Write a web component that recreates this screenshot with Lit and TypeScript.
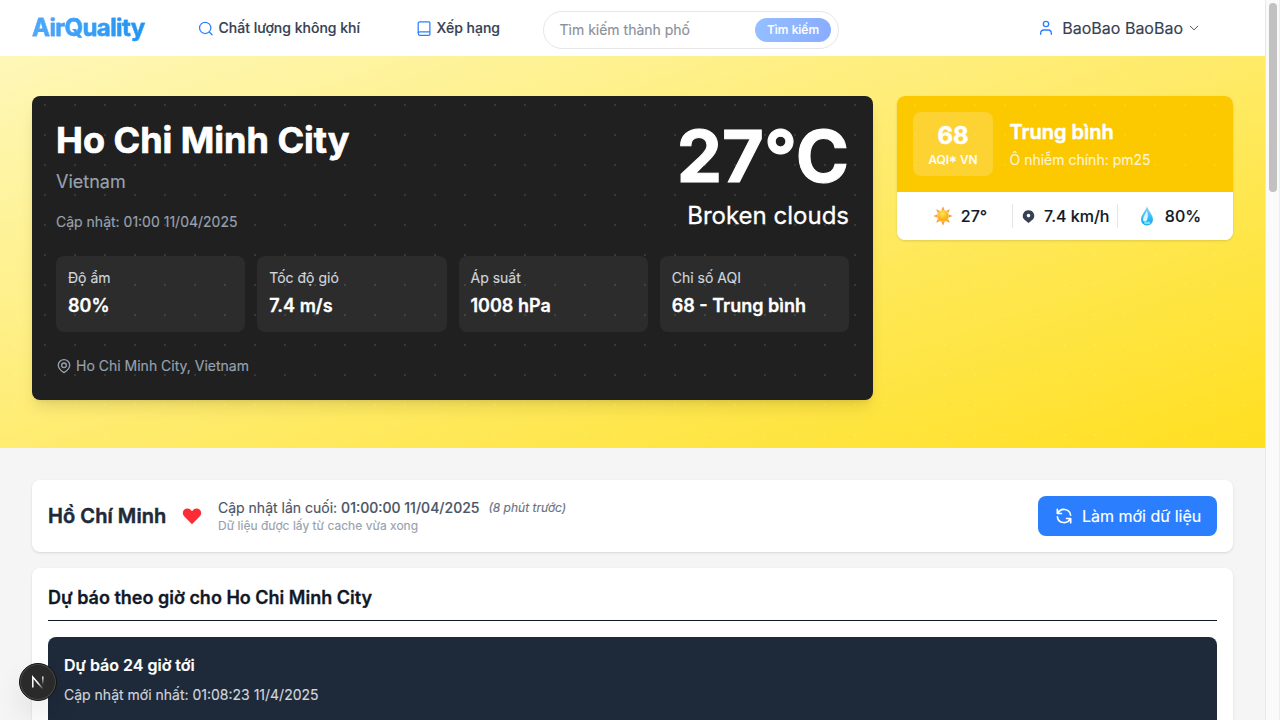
import { LitElement, html, css, svg } from "lit";
import { customElement } from "lit/decorators.js";

const stats = [
  ["Độ ẩm", "80%"],
  ["Tốc độ gió", "7.4 m/s"],
  ["Áp suất", "1008 hPa"],
  ["Chỉ số AQI", "68 - Trung bình"],
];

const rays = Array.from({ length: 8 }, (_, i) => i * 45);

@customElement("app-root")
export class AppRoot extends LitElement {
  static styles = css`
    :host {
      display: flex;
      width: 1280px;
      height: 720px;
      overflow: hidden;
      position: relative;
      background: #f5f5f5;
      font-family: Inter, "Noto Sans", sans-serif;
      font-size: 16px;
      line-height: 24px;
      color: #101828;
      -webkit-text-stroke: 0.15px currentColor;
    }
    * { box-sizing: border-box; margin: 0; }
    svg { display: block; flex: none; }
    .page { width: 1265px; height: 720px; overflow: hidden; }
    .scroll { width: 15px; background: #fafafa; border-left: 1px solid #e8e8e8; border-right: 1px solid #ededed; padding: 3px 2px 0 3px; }
    .thumb { width: 8px; height: 189px; border-radius: 4px; background: #c1c1c1; }
    .header { height: 56px; background: #fff; display: flex; align-items: center; padding: 0 66px 0 32px; }
    .logo { font-size: 24px; line-height: 32px; font-weight: 700; letter-spacing: -0.6px; width: 113px; white-space: nowrap; background: linear-gradient(90deg, #51a9fa, #1f93f3); -webkit-background-clip: text; background-clip: text; color: transparent; -webkit-text-stroke: 0.4px #3a9ff6; }
    .nav { display: flex; align-items: center; gap: 6px; font-size: 14px; line-height: 20px; font-weight: 500; color: #364153; white-space: nowrap; }
    .nav svg, .user .person { color: #2b7fff; }
    .nav-air { margin-left: 52.5px; width: 164px; }
    .nav-rank { margin-left: 54px; width: 85.5px; }
    .search { margin: 4px 0 0 42px; width: 296px; height: 38px; border: 1px solid #e5e7eb; border-radius: 19px; display: flex; align-items: center; justify-content: space-between; padding: 0 7px 0 15.5px; font-size: 14px; color: #8b909a; }
    .search-btn { width: 76px; height: 24px; border-radius: 12px; background: linear-gradient(90deg, #94bfff, #8aacff); color: #fff; font-size: 12px; font-weight: 500; text-align: center; }
    .user { margin-left: auto; display: flex; align-items: center; color: #364153; }
    .user .name { margin: 0 6px 0 8px; }
    .hero { position: relative; height: 392px; padding: 40px 32px 0; display: flex; align-items: flex-start; gap: 24px; background: linear-gradient(to bottom right, #fef9c2, #ffdf20) 0 -56px / 1265px 448px no-repeat; }
    .dots { position: absolute; inset: 0; pointer-events: none; background: radial-gradient(circle at center, rgba(255, 255, 255, 0.1) 1px, transparent 1px) 0 -56px / 30px 30px; }
    .weather { width: 841px; height: 304px; padding: 24px; border-radius: 8px; background: #202020; box-shadow: 0 10px 15px -3px #0000001a, 0 4px 6px -4px #0000001a; color: #fff; }
    .top { display: flex; justify-content: space-between; height: 136px; }
    .city { font-size: 36px; line-height: 40px; font-weight: 700; -webkit-text-stroke-width: 0.7px; }
    .country { font-size: 18px; line-height: 28px; color: #99a1af; margin-top: 8px; }
    .time { font-size: 14px; line-height: 20px; color: #99a1af; margin-top: 16px; }
    .temp-box { text-align: right; }
    .temp { font-size: 72px; line-height: 72px; font-weight: 700; -webkit-text-stroke-width: 1px; }
    .desc { font-size: 24px; line-height: 32px; margin-top: 8px; -webkit-text-stroke-width: 0.3px; }
    .stats { display: grid; grid-template-columns: repeat(4, 1fr); gap: 12px; }
    .stat { height: 76px; padding: 12px; border-radius: 8px; background: #2c2c2c; }
    .label { font-size: 14px; line-height: 20px; color: #d1d5dc; }
    .value { font-size: 18px; line-height: 28px; font-weight: 600; margin-top: 4px; -webkit-text-stroke-width: 0.3px; }
    .place { display: flex; align-items: center; gap: 4px; margin-top: 24px; font-size: 14px; line-height: 20px; color: #99a1af; }
    .aqi { width: 336px; height: 144px; border-radius: 8px; overflow: hidden; background: #fff; box-shadow: 0 1px 3px #0000001a, 0 1px 2px -1px #0000001a; }
    .aqi-top { height: 96px; background: #fcc800; padding: 16px; display: flex; gap: 16.5px; align-items: center; color: #fff; }
    .score { width: 80px; height: 64px; border-radius: 8px; background: #ffffff33; text-align: center; padding-top: 8px; }
    .num { font-size: 24px; line-height: 32px; font-weight: 700; -webkit-text-stroke-width: 0.5px; }
    .unit { font-size: 12px; line-height: 16px; font-weight: 500; }
    .star { font-size: 15px; line-height: 0; vertical-align: -3px; }
    .level { font-size: 20px; line-height: 28px; font-weight: 600; -webkit-text-stroke-width: 0.5px; }
    .cause { font-size: 14px; line-height: 20px; color: #ffffffcc; margin-top: 4px; }
    .aqi-bottom { position: relative; z-index: 1; background: #fff; border-radius: 0 0 8px 8px; height: 48px; padding: 12px 10px; display: grid; grid-template-columns: 106px 105px 1fr; font-weight: 500; }
    .cell { display: flex; align-items: center; justify-content: center; gap: 8px; border-right: 1px solid #e5e7eb; white-space: nowrap; }
    .cell:first-child { padding-left: 1px; }
    .cell:last-child { border: 0; padding-right: 3px; }
    .cell:nth-child(2) { justify-content: flex-start; padding-left: 8px; }
    .main { padding: 32px 32px 0; display: flex; flex-direction: column; gap: 16px; }
    .card { background: #fff; border-radius: 8px; padding: 16px; box-shadow: 0 1px 3px #0000001a, 0 1px 2px -1px #0000001a; }
    .status { height: 72px; display: flex; align-items: center; }
    .title { font-size: 20px; line-height: 28px; font-weight: 600; color: #1e2939; width: 118px; letter-spacing: 0.07px; white-space: nowrap; -webkit-text-stroke-width: 0.5px; }
    .heart { margin: 0 16px; }
    .updated { font-size: 14px; line-height: 20px; color: #4a5565; display: flex; align-items: center; }
    .updated b { font-weight: 500; margin-left: 4px; }
    .updated i { font-size: 12px; line-height: 16px; margin-left: 9px; color: #6a7282; }
    .cache { font-size: 12px; line-height: 16px; color: #99a1af; letter-spacing: 0.03px; }
    .refresh { margin-left: auto; width: 179px; height: 40px; border-radius: 8px; background: #2b7fff; color: #fff; display: flex; align-items: center; padding-left: 16px; gap: 8px; white-space: nowrap; }
    .forecast { height: 300px; }
    .heading { font-size: 18px; line-height: 28px; font-weight: 600; height: 37px; border-bottom: 1px solid #101828; -webkit-text-stroke-width: 0.3px; }
    .panel { margin-top: 16px; height: 200px; border-radius: 8px; background: #1e2939; padding: 16px; color: #fff; }
    .panel-title { font-weight: 600; }
    .panel-time { font-size: 14px; line-height: 20px; margin-top: 8px; color: #d1d5dc; }
    .badge { position: absolute; left: 19px; top: 663px; width: 38px; height: 38px; border-radius: 50%; background: #2a2a2a; border: 1px solid #141414; box-shadow: inset 0 0 0 1px #4b4b4b, 0 16px 32px -8px #0000003d; display: grid; place-items: center; }
  `;

  private icon(size: number, body: unknown, width = 2, cls = "") {
    return html`<svg class=${cls} width=${size} height=${size} viewBox="0 0 24 24" fill="none" stroke="currentColor" stroke-width=${width} stroke-linecap="round" stroke-linejoin="round">${body}</svg>`;
  }

  private sun() {
    return html`<svg width="20" height="20" viewBox="0 0 20 20">
      <defs><radialGradient id="sun" cx=".45" cy=".3"><stop offset="0" stop-color="#ffe64f" /><stop offset="1" stop-color="#fbb01c" /></radialGradient></defs>
      ${rays.map((a) => svg`<path d="M8.4 4 10 .3 11.600 4z" fill="#eda552" transform="rotate(${a} 10 10)"/>`)}
      <circle cx="10" cy="10" r="5.900" fill="url(#sun)" />
    </svg>`;
  }

  private drop() {
    return html`<svg width="20" height="20" viewBox="0 0 20 20">
      <defs><linearGradient id="drop" x1="0" y1="0" x2="0" y2="1"><stop offset="0" stop-color="#8fd0ee" /><stop offset=".5" stop-color="#3fc0f7" /><stop offset="1" stop-color="#0ea2f0" /></linearGradient></defs>
      <path d="M10 .3C9 4.500 4 9 4 13.500a6 6 0 0 0 12 0C16 9 11 4.500 10 .3z" fill="url(#drop)" />
      <path d="M9.900 4.500C8.500 8 6.200 10.500 6 13.500c0 2.300 2 2.500 3.200 1.500C11 13.200 11.500 9 9.900 4.500z" fill="#d9f4ff" />
      <ellipse cx="10.300" cy="16.900" rx="3.200" ry="1.400" fill="#6fe0ff" />
    </svg>`;
  }

  render() {
    return html`
      <div class="page">
        <header class="header">
          <div class="logo">AirQuality</div>
          <div class="nav nav-air">${this.icon(15, svg`<circle cx="11.500" cy="11" r="9"/><path d="m22.500 22-4.400-4.400"/>`)}<span>Chất lượng không khí</span></div>
          <div class="nav nav-rank">${this.icon(15, svg`<path d="M3.500 20V4a2.800 2.800 0 0 1 2.800-2.800h14.400a1.500 1.500 0 0 1 1.500 1.500v18.600a1.500 1.500 0 0 1-1.500 1.500H6.300a2.800 2.800 0 0 1 0-5.600h15.900"/>`)}<span>Xếp hạng</span></div>
          <div class="search"><span>Tìm kiếm thành phố</span><div class="search-btn">Tìm kiếm</div></div>
          <div class="user">${this.icon(16, svg`<circle cx="12" cy="6" r="4"/><path d="M4 21.500v-1.500a5 5 0 0 1 5-5h6a5 5 0 0 1 5 5v1.500"/>`, 2, "person")}<span class="name">BaoBao BaoBao</span>${this.icon(10, svg`<path d="m3 7.500 9 9 9-9"/>`, 2.2)}</div>
        </header>
        <section class="hero">
          <div class="weather">
            <div class="top">
              <div>
                <h1 class="city">Ho Chi Minh City</h1>
                <p class="country">Vietnam</p>
                <p class="time">Cập nhật: 01:00 11/04/2025</p>
              </div>
              <div class="temp-box"><div class="temp">27°C</div><div class="desc">Broken clouds</div></div>
            </div>
            <div class="stats">${stats.map(([l, v]) => html`<div class="stat"><div class="label">${l}</div><div class="value">${v}</div></div>`)}</div>
            <div class="place">${this.icon(16, svg`<path d="M12 22c-2.500-1.500-8.500-5.800-8.500-11a8.500 8.500 0 0 1 17 0c0 5.200-6 9.500-8.500 11z"/><circle cx="12" cy="11" r="3.500"/>`)}<span>Ho Chi Minh City, Vietnam</span></div>
          </div>
          <div class="aqi">
            <div class="aqi-top">
              <div class="score"><div class="num">68</div><div class="unit">AQI<span class="star">*</span> VN</div></div>
              <div><div class="level">Trung bình</div><div class="cause">Ô nhiễm chính: pm25</div></div>
            </div>
            <div class="aqi-bottom">
              <div class="cell">${this.sun()}<span>27°</span></div>
              <div class="cell"><svg width="15" height="15" viewBox="0 0 15 15" fill="#364153"><path fill-rule="evenodd" d="M7.500 1.200a5.600 5.600 0 0 1 4.300 9.300L7.500 14 3.200 10.500a5.600 5.600 0 0 1 4.300-9.300zm0 7.200a1.800 1.800 0 1 0 0-3.600 1.800 1.800 0 0 0 0 3.600z" /></svg><span>7.4 km/h</span></div>
              <div class="cell">${this.drop()}<span>80%</span></div>
            </div>
          </div>
          <div class="dots"></div>
        </section>
        <main class="main">
          <section class="card status">
            <h2 class="title">Hồ Chí Minh</h2>
            <svg class="heart" width="20" height="20" viewBox="0 0 20 20" fill="#fb2c36"><path d="M3.170 5.170a4 4 0 0 1 5.660 0L10 6.340l1.170-1.170a4 4 0 1 1 5.660 5.660L10 17.660l-6.830-6.830a4 4 0 0 1 0-5.660z" transform="translate(-1.500 -2.100) scale(1.150)" /></svg>
            <div>
              <div class="updated"><span>Cập nhật lần cuối:</span><b>01:00:00 11/04/2025</b><i>(8 phút trước)</i></div>
              <div class="cache">Dữ liệu được lấy từ cache vừa xong</div>
            </div>
            <div class="refresh">${this.icon(20, svg`<path d="M4 4v5h5M4.600 9a8 8 0 0 1 15.300 2M20 20v-5h-5m4.400 0A8 8 0 0 1 4.100 13"/>`, 2)}<span>Làm mới dữ liệu</span></div>
          </section>
          <section class="card forecast">
            <h2 class="heading">Dự báo theo giờ cho Ho Chi Minh City</h2>
            <div class="panel"><div class="panel-title">Dự báo 24 giờ tới</div><div class="panel-time">Cập nhật mới nhất: 01:08:23 11/4/2025</div></div>
          </section>
        </main>
      </div>
      <div class="scroll"><div class="thumb"></div></div>
      <div class="badge"><svg width="16" height="16" viewBox="0 0 16 16" fill="none">
        <defs>
          <linearGradient id="diag" x1="8" y1="9" x2="13" y2="15" gradientUnits="userSpaceOnUse"><stop stop-color="#fff" /><stop offset="1" stop-color="#fff" stop-opacity="0" /></linearGradient>
          <linearGradient id="stem" x1="0" y1="2" x2="0" y2="11" gradientUnits="userSpaceOnUse"><stop stop-color="#fff" /><stop offset="1" stop-color="#fff" stop-opacity="0" /></linearGradient>
        </defs>
        <path d="M2.800 13.500v-10.500L13 15" stroke="url(#diag)" stroke-width="1.500" /><path d="M12.800 2.500v9" stroke="url(#stem)" stroke-width="1.500" />
      </svg></div>
    `;
  }
}
